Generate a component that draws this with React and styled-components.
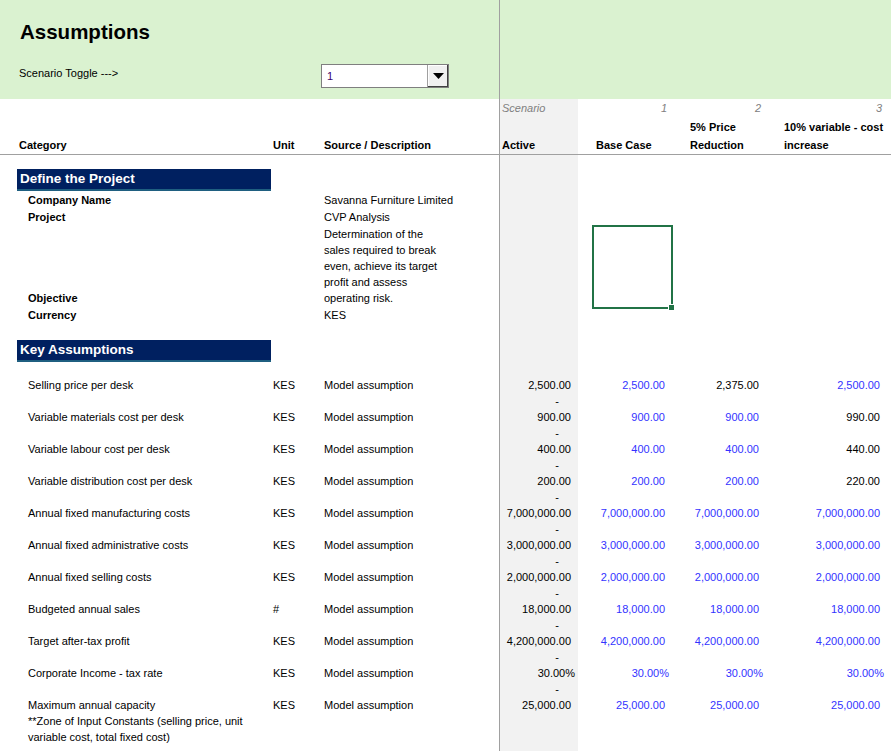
import React from "react";
import styled, { createGlobalStyle } from "styled-components";

const COLS = "17px 254px 51px 177px 1px 78px 94px 94px 125px";

const Global = createGlobalStyle`
  html, body { margin: 0; padding: 0; background: #fff; }
  body {
    font-family: "Liberation Sans", Arial, sans-serif;
    font-size: 11px;
    color: #000;
  }
  #root { min-height: 100vh; }
`;

const Page = styled.div`
  display: flex;
  flex-direction: column;
  min-height: 100vh;
  overflow: hidden;
`;

/* ---------- green banner ---------- */
const Banner = styled.header`
  display: grid;
  grid-template-columns: 499px 1px 1fr;
  height: 99px;
  background: #daf2d0;
`;
const BannerMain = styled.div`
  padding: 18px 0 0 19px;
  display: flex;
  flex-direction: column;
`;
const Title = styled.h1`
  margin: 0 0 0 1px;
  font-size: 20.5px;
  line-height: 28px;
  font-weight: 700;
`;
const ToggleRow = styled.div`
  margin-top: 18px;
  display: flex;
  align-items: flex-start;
`;
const ToggleLabel = styled.span`
  width: 302px;
  line-height: 18px;
`;
const Dropdown = styled.div`
  width: 128px;
  height: 24px;
  box-sizing: border-box;
  border: 1px solid #7f7f7f;
  background: #fff;
  display: flex;
`;
const DropValue = styled.span`
  flex: 1;
  padding-left: 5px;
  line-height: 22px;
  color: #3b006b;
`;
const DropButton = styled.span`
  width: 20px;
  background: #f0f0f0;
  border-left: 1px solid #a0a0a0;
  box-shadow: inset -1px -1px 0 #404040, inset 1px 1px 0 #fff;
  display: flex;
  align-items: center;
  justify-content: center;
`;

/* ---------- sheet grid ---------- */
const Row = styled.div`
  display: grid;
  grid-template-columns: ${COLS};
  height: ${(p) => (p.$h ? `${p.$h}px` : "auto")};
  line-height: ${(p) => p.$lh || 16}px;
  flex: ${(p) => (p.$grow ? 1 : "none")};
  border-bottom: ${(p) => (p.$rule ? "1px solid #a0a0a0" : "none")};
`;

const Gutter = styled.div``;

const TextCell = styled.div`
  display: flex;
  flex-direction: column;
  justify-content: flex-end;
  white-space: nowrap;
  padding-left: ${(p) => p.$pl ?? 2}px;
  font-weight: ${(p) => (p.$bold ? 700 : 400)};
`;

const Divider = styled.div`
  background: #a0a0a0;
`;

const ActiveCell = styled.div`
  display: flex;
  flex-direction: column;
  justify-content: flex-end;
  white-space: nowrap;
  background: #f2f2f2;
  text-align: ${(p) => (p.$left ? "left" : "right")};
  padding: 0 ${(p) => p.$pr ?? 7}px 0 ${(p) => p.$pl ?? 0}px;
  font-weight: ${(p) => (p.$bold ? 700 : 400)};
  font-style: ${(p) => (p.$italic ? "italic" : "normal")};
  color: ${(p) => p.$color || "#000"};
`;

const ValueCell = styled.div`
  position: relative;
  display: flex;
  flex-direction: column;
  justify-content: flex-end;
  white-space: nowrap;
  text-align: ${(p) => (p.$left ? "left" : "right")};
  padding: 0 ${(p) => p.$pr ?? 7}px 0 ${(p) => p.$pl ?? 0}px;
  font-weight: ${(p) => (p.$bold ? 700 : 400)};
  font-style: ${(p) => (p.$italic ? "italic" : "normal")};
  color: ${(p) => p.$color || "#000"};
`;

const SectionBar = styled.div`
  background: #002060;
  border-bottom: 2px solid #1f5f80;
  color: #fff;
  font-size: 13.5px;
  font-weight: 700;
  line-height: 20px;
  padding-left: 3px;
  white-space: nowrap;
`;

const Selection = styled.div`
  position: absolute;
  left: 14px;
  top: -1px;
  width: 81px;
  height: 84px;
  box-sizing: border-box;
  border: 2px solid #217346;
`;
const Handle = styled.span`
  position: absolute;
  right: -3px;
  bottom: -3px;
  width: 5px;
  height: 5px;
  background: #217346;
  box-shadow: 0 0 0 1px #fff;
`;

const BLUE = "#3333ff";
const GREY = "#808080";

/* ---------- data ---------- */
const assumptions = [
  { label: "Selling price per desk", unit: "KES", v: ["2,500.00", "2,500.00", "2,375.00", "2,500.00"], b: [0, 1, 0, 1] },
  { label: "Variable materials cost per desk", unit: "KES", v: ["900.00", "900.00", "900.00", "990.00"], b: [0, 1, 1, 0] },
  { label: "Variable labour cost per desk", unit: "KES", v: ["400.00", "400.00", "400.00", "440.00"], b: [0, 1, 1, 0] },
  { label: "Variable distribution cost per desk", unit: "KES", v: ["200.00", "200.00", "200.00", "220.00"], b: [0, 1, 1, 0] },
  { label: "Annual fixed manufacturing costs", unit: "KES", v: ["7,000,000.00", "7,000,000.00", "7,000,000.00", "7,000,000.00"], b: [0, 1, 1, 1] },
  { label: "Annual fixed administrative costs", unit: "KES", v: ["3,000,000.00", "3,000,000.00", "3,000,000.00", "3,000,000.00"], b: [0, 1, 1, 1] },
  { label: "Annual fixed selling costs", unit: "KES", v: ["2,000,000.00", "2,000,000.00", "2,000,000.00", "2,000,000.00"], b: [0, 1, 1, 1] },
  { label: "Budgeted annual sales", unit: "#", v: ["18,000.00", "18,000.00", "18,000.00", "18,000.00"], b: [0, 1, 1, 1] },
  { label: "Target after-tax profit", unit: "KES", v: ["4,200,000.00", "4,200,000.00", "4,200,000.00", "4,200,000.00"], b: [0, 1, 1, 1] },
  { label: "Corporate Income - tax rate", unit: "KES", v: ["30.00%", "30.00%", "30.00%", "30.00%"], b: [0, 1, 1, 1], pct: true },
  { label: "Maximum annual capacity", unit: "KES", v: ["25,000.00", "25,000.00", "25,000.00", "25,000.00"], b: [0, 1, 1, 1] },
];

const valuePad = [7, 7, 11];
const pctPad = [3, 3, 7];

function Lines({ items }) {
  return items.map((t, i) => <span key={i}>{t}</span>);
}

function EmptyRow({ h, grow, children }) {
  return (
    <Row $h={h} $grow={grow}>
      <Gutter />
      <TextCell $pl={11}>{children}</TextCell>
      <TextCell />
      <TextCell />
      <Divider />
      <ActiveCell />
      <ValueCell />
      <ValueCell />
      <ValueCell />
    </Row>
  );
}

function SectionRow({ title }) {
  return (
    <Row $h={22} $lh={20}>
      <Gutter />
      <SectionBar>{title}</SectionBar>
      <TextCell />
      <TextCell />
      <Divider />
      <ActiveCell />
      <ValueCell />
      <ValueCell />
      <ValueCell />
    </Row>
  );
}

function InfoRow({ h, lh, label, source, children }) {
  return (
    <Row $h={h} $lh={lh}>
      <Gutter />
      <TextCell $pl={11} $bold>
        {label}
      </TextCell>
      <TextCell />
      <TextCell>{source}</TextCell>
      <Divider />
      <ActiveCell />
      <ValueCell>{children}</ValueCell>
      <ValueCell />
      <ValueCell />
    </Row>
  );
}

function DataRow({ item }) {
  return (
    <Row $h={16}>
      <Gutter />
      <TextCell $pl={11}>{item.label}</TextCell>
      <TextCell>{item.unit}</TextCell>
      <TextCell>Model assumption</TextCell>
      <Divider />
      <ActiveCell $pr={item.pct ? 3 : 7}>{item.v[0]}</ActiveCell>
      {item.v.slice(1).map((val, i) => (
        <ValueCell
          key={i}
          $pr={item.pct ? pctPad[i] : valuePad[i]}
          $color={item.b[i + 1] ? BLUE : "#000"}
        >
          {val}
        </ValueCell>
      ))}
    </Row>
  );
}

function DashRow() {
  return (
    <Row $h={16}>
      <Gutter />
      <TextCell />
      <TextCell />
      <TextCell />
      <Divider />
      <ActiveCell $pr={19}>-</ActiveCell>
      <ValueCell />
      <ValueCell />
      <ValueCell />
    </Row>
  );
}

export default function App() {
  return (
    <>
      <Global />
      <Page>
        <Banner>
          <BannerMain>
            <Title>Assumptions</Title>
            <ToggleRow>
              <ToggleLabel>Scenario Toggle ---&gt;</ToggleLabel>
              <Dropdown>
                <DropValue>1</DropValue>
                <DropButton>
                  <svg width="11" height="6" viewBox="0 0 11 6">
                    <polygon points="0,0 11,0 5.5,6" fill="#000" />
                  </svg>
                </DropButton>
              </Dropdown>
            </ToggleRow>
          </BannerMain>
          <Divider />
          <div />
        </Banner>

        <Row $h={18} $lh={18}>
          <Gutter />
          <TextCell />
          <TextCell />
          <TextCell />
          <Divider />
          <ActiveCell $left $pl={2} $pr={0} $italic $color={GREY}>
            Scenario
          </ActiveCell>
          <ValueCell $pr={5} $italic $color={GREY}>1</ValueCell>
          <ValueCell $pr={5} $italic $color={GREY}>2</ValueCell>
          <ValueCell $pr={9} $italic $color={GREY}>3</ValueCell>
        </Row>

        <Row $h={37} $lh={18} $rule>
          <Gutter />
          <TextCell $bold>Category</TextCell>
          <TextCell $bold>Unit</TextCell>
          <TextCell $bold>Source / Description</TextCell>
          <Divider />
          <ActiveCell $left $pl={2} $pr={0} $bold>
            Active
          </ActiveCell>
          <ValueCell $left $pl={18} $pr={0} $bold>
            Base Case
          </ValueCell>
          <ValueCell $left $pl={18} $pr={0} $bold>
            <Lines items={["5% Price", "Reduction"]} />
          </ValueCell>
          <ValueCell $left $pl={18} $pr={0} $bold>
            <Lines items={["10% variable - cost", "increase"]} />
          </ValueCell>
        </Row>

        <EmptyRow h={14} />
        <SectionRow title="Define the Project" />
        <InfoRow h={18} lh={18} label="Company Name" source="Savanna Furniture Limited" />
        <InfoRow h={17} lh={17} label="Project" source="CVP Analysis" />
        <InfoRow
          h={80}
          lh={16}
          label="Objective"
          source={
            <Lines
              items={[
                "Determination of the",
                "sales required to break",
                "even, achieve its target",
                "profit and assess",
                "operating risk.",
              ]}
            />
          }
        >
          <Selection>
            <Handle />
          </Selection>
        </InfoRow>
        <InfoRow h={19} lh={19} label="Currency" source="KES" />

        <EmptyRow h={15} />
        <SectionRow title="Key Assumptions" />
        <EmptyRow h={15} />

        {assumptions.map((item, i) => (
          <React.Fragment key={item.label}>
            {i > 0 && <DashRow />}
            <DataRow item={item} />
          </React.Fragment>
        ))}

        <EmptyRow h={16}>**Zone of Input Constants (selling price, unit</EmptyRow>
        <EmptyRow h={16}>variable cost, total fixed cost)</EmptyRow>
        <EmptyRow grow />
      </Page>
    </>
  );
}
